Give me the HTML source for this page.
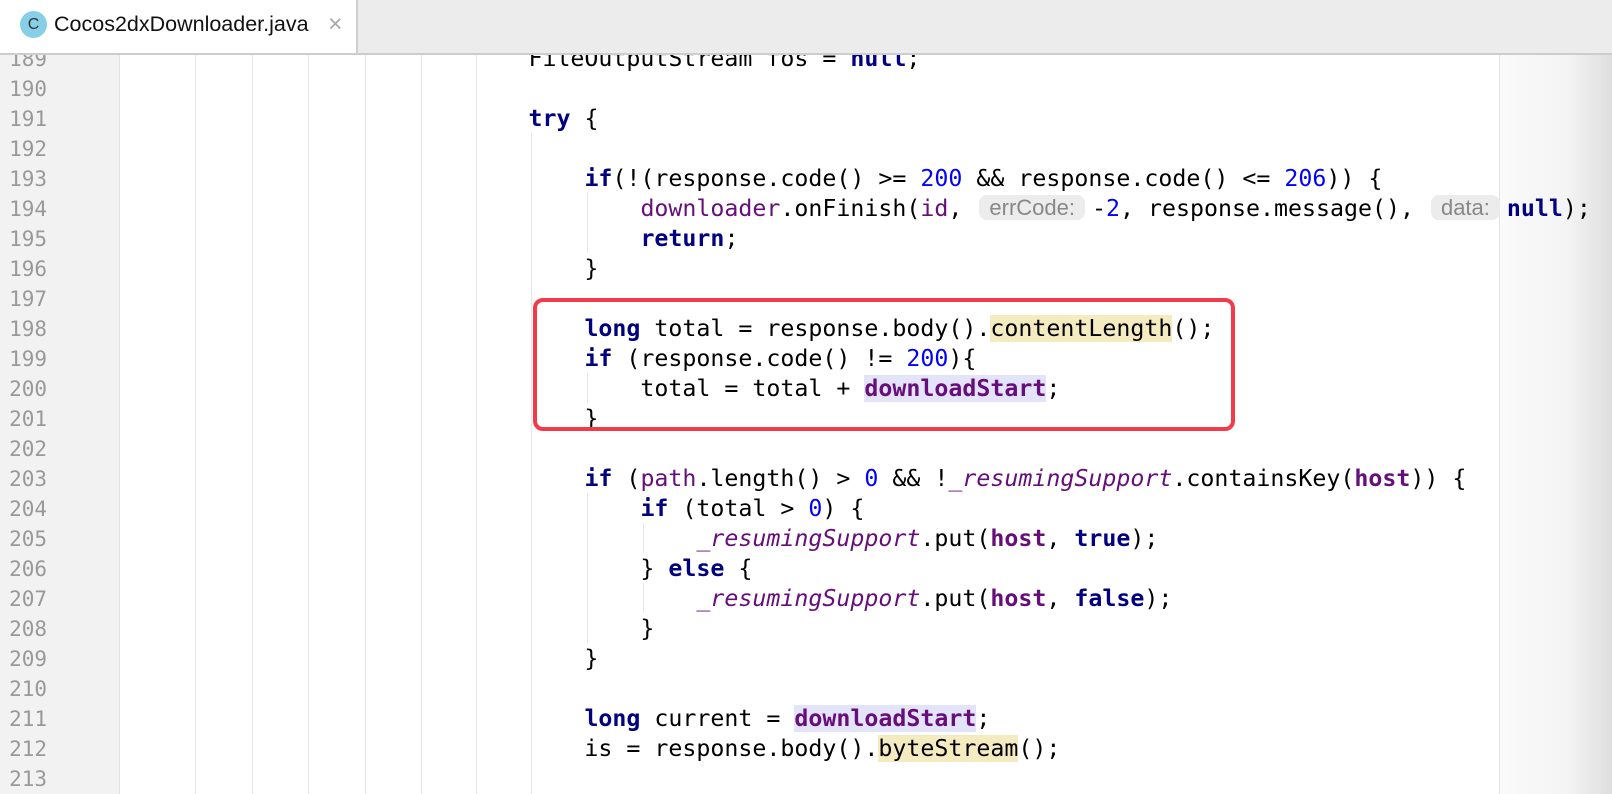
<!DOCTYPE html>
<html><head><meta charset="utf-8"><style>
*{margin:0;padding:0;box-sizing:border-box}
body{width:1612px;height:794px;overflow:hidden;background:#fff;position:relative;font-family:"DejaVu Sans Mono","Liberation Mono",monospace}
#tabs{position:absolute;left:0;top:0;width:1612px;height:55px;background:#ececec;border-bottom:2px solid #cdcdcd;z-index:5}
#tab{position:absolute;left:0;top:0;width:358px;height:53px;background:#fff;border-right:2px solid #cfcfcf}
#ico{position:absolute;left:20px;top:11px;width:27px;height:27px;border-radius:50%;background:#86cfe6;color:#333;font:16px "Liberation Sans",sans-serif;text-align:center;line-height:27px}
#tt{position:absolute;left:54px;top:12px;font:21.5px "Liberation Sans",sans-serif;color:#111}
#tx{position:absolute;left:328px;top:10px;font:25px "Liberation Sans",sans-serif;color:#aaa}
#gut{position:absolute;left:0;top:0;width:120px;height:794px;background:#f2f2f2;border-right:1px solid #e2e2e2}
#right{position:absolute;left:1499px;top:0;width:113px;height:794px;background:linear-gradient(90deg,#fafafa 0%,#f4f4f4 60%,#dedede 100%);border-left:1px solid #e4e4e4}
.g{position:absolute;width:1px;background:#e6e6e6}
#nums{position:absolute;left:0;top:44px;width:47px;text-align:right;color:#999;font-size:21px;line-height:30px}
#code{position:absolute;left:192.5px;top:44px;font-size:23.25px;line-height:30px;white-space:pre;color:#000}
.k{color:#000080;font-weight:bold}
.n{color:#0000ff}
.p{color:#660e7a}
.pb{color:#660e7a;font-weight:bold}
.i{color:#660e7a;font-style:italic}
.y{background:#f5ebc0}
.l{background:#e3e3fa}
.h{display:inline-block;background:#ececec;color:#888;font:22px "Liberation Sans",sans-serif;border-radius:8px;padding:0 10px;line-height:25px;margin:0 7px 0 3px;vertical-align:1px}
#box{position:absolute;left:533px;top:298px;width:702px;height:133px;border:4px solid #f23a4b;border-radius:10px}
</style></head><body>
<div id="gut"></div>
<div id="right"></div>
<div class="g" style="left:195px;top:55px;height:739px"></div>
<div class="g" style="left:252px;top:55px;height:739px"></div>
<div class="g" style="left:308px;top:55px;height:739px"></div>
<div class="g" style="left:365px;top:55px;height:739px"></div>
<div class="g" style="left:421px;top:55px;height:739px"></div>
<div class="g" style="left:476px;top:55px;height:739px"></div>
<div class="g" style="left:531px;top:133px;height:661px"></div>
<div class="g" style="left:587px;top:193px;height:60px"></div>
<div class="g" style="left:587px;top:373px;height:30px"></div>
<div class="g" style="left:587px;top:493px;height:150px"></div>
<div class="g" style="left:643px;top:523px;height:30px"></div>
<div class="g" style="left:643px;top:583px;height:30px"></div>
<div id="nums">189<br>190<br>191<br>192<br>193<br>194<br>195<br>196<br>197<br>198<br>199<br>200<br>201<br>202<br>203<br>204<br>205<br>206<br>207<br>208<br>209<br>210<br>211<br>212<br>213</div>
<div id="code">                        FileOutputStream fos = <span class="k">null</span>;

                        <span class="k">try</span> {

                            <span class="k">if</span>(!(response.code() &gt;= <span class="n">200</span> &amp;&amp; response.code() &lt;= <span class="n">206</span>)) {
                                <span class="p">downloader</span>.onFinish(<span class="p">id</span>, <span class="h">errCode:</span>-<span class="n">2</span>, response.message(), <span class="h">data:</span><span class="k">null</span>);
                                <span class="k">return</span>;
                            }

                            <span class="k">long</span> total = response.body().<span class="y">contentLength</span>();
                            <span class="k">if</span> (response.code() != <span class="n">200</span>){
                                total = total + <span class="pb l">downloadStart</span>;
                            }

                            <span class="k">if</span> (<span class="p">path</span>.length() &gt; <span class="n">0</span> &amp;&amp; !<span class="i">_resumingSupport</span>.containsKey(<span class="pb">host</span>)) {
                                <span class="k">if</span> (total &gt; <span class="n">0</span>) {
                                    <span class="i">_resumingSupport</span>.put(<span class="pb">host</span>, <span class="k">true</span>);
                                } <span class="k">else</span> {
                                    <span class="i">_resumingSupport</span>.put(<span class="pb">host</span>, <span class="k">false</span>);
                                }
                            }

                            <span class="k">long</span> current = <span class="pb l">downloadStart</span>;
                            is = response.body().<span class="y">byteStream</span>();
</div>
<div id="box"></div>
<div id="tabs"><div id="tab"><div id="ico">C</div><div id="tt">Cocos2dxDownloader.java</div><div id="tx">×</div></div></div>
</body></html>
